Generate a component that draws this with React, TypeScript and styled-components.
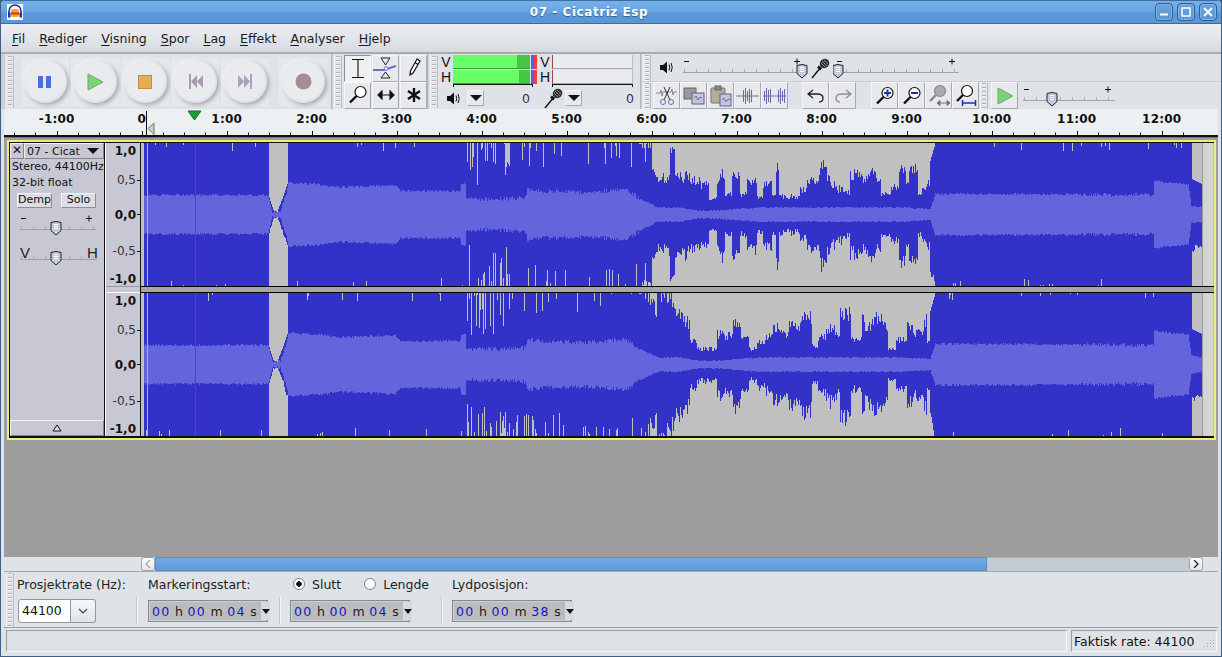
import React from 'react'
import styled, { createGlobalStyle } from 'styled-components'

const GlobalStyle = createGlobalStyle`
  html, body {
    margin: 0;
    height: 657px;
    overflow: hidden;
    background: #3a5a80;
  }
  body, button {
    font-family: "DejaVu Sans", sans-serif;
    font-size: 12.5px;
    color: #111;
  }
`

/* waveform data */
type Pt = [number, number]

const PEAK: Pt[] = [
  [143, 1], [268.9, 1], [269, 0.24], [273, 0.06], [277, 0.04], [283, 0.26], [287.9, 0.47], [288, 1],
  [638, 1], [641, 0.98], [650, 0.9], [660, 0.78], [675, 0.66], [690, 0.46], [720, 0.42], [760, 0.46],
  [800, 0.48], [850, 0.52], [900, 0.5], [925, 0.46], [930, 0.75], [935, 1], [1191, 1], [1191.5, 0.5], [1202, 0.42],
]

const RMS: Pt[] = [
  [143, 0.27], [268, 0.27], [272, 0.04], [280, 0.05], [286, 0.3], [288, 0.44], [320, 0.42], [340, 0.38],
  [395, 0.41], [400, 0.33], [460, 0.33], [460.5, 0.43], [465, 0.43], [466, 0.22], [503, 0.22], [525, 0.24],
  [527, 0.36], [540, 0.33], [590, 0.31], [625, 0.36], [640, 0.22], [657, 0.1], [680, 0.1], [700, 0.05],
  [720, 0.06], [760, 0.1], [900, 0.1], [930, 0.08], [935, 0.29], [1080, 0.28], [1150, 0.27], [1153, 0.27],
  [1154, 0.47], [1188, 0.42], [1191, 0.12], [1202, 0.1],
]

const makeRandom = (seed: number) => () => {
  seed = (seed + 0x6d2b79f5) | 0
  let t = Math.imul(seed ^ (seed >>> 15), 1 | seed)
  t = (t + Math.imul(t ^ (t >>> 7), 61 | t)) ^ t
  return ((t ^ (t >>> 14)) >>> 0) / 4294967296
}

const lerp = (pts: Pt[], x: number) => {
  for (let i = 1; i < pts.length; i++) {
    if (x <= pts[i][0]) {
      const [x0, y0] = pts[i - 1]
      const [x1, y1] = pts[i]
      return y0 + ((y1 - y0) * (x - x0)) / (x1 - x0)
    }
  }
  return pts[pts.length - 1][1]
}

const buildChannel = (seed: number) => {
  const rnd = makeRandom(seed)
  const half = 71.5
  let peakPath = ''
  let rmsPath = ''
  let lump = 1
  let lumpLeft = 0
  for (let x = 144; x < 1202; x++) {
    const base = lerp(PEAK, x)
    const quiet = x > 641 && x < 930
    if (lumpLeft-- <= 0) {
      lump = 0.45 + rnd() * 0.95
      lumpLeft = 2 + Math.floor(rnd() * 9)
    }
    const wobble = quiet ? lump * (0.85 + rnd() * 0.3) : 1
    const spike = (len: number, p: number) => (rnd() < p ? rnd() * len : 0)
    let zone: [number, number] = [0.12, 0.04]
    if (x > 466 && x < 510) zone = [0.6, 0.42]
    else if (x >= 510 && x < 640) zone = [0.34, 0.09]
    const full = base >= 1
    const up = full ? 1 - spike(zone[0], zone[1]) : Math.min(1, base * wobble)
    const down = full ? 1 - spike(zone[0], zone[1]) : Math.min(1, base * wobble * (0.9 + rnd() * 0.2))
    const jitter = x > 470 && x < 640 ? 0.06 : x > 1080 && x < 1154 ? 0.05 : x < 935 && x > 641 ? 0.02 : 0.03
    const r = Math.max(0.02, lerp(RMS, x) + (rnd() - 0.5) * jitter)
    const y0 = (half - up * half).toFixed(1)
    const y1 = (half + down * half).toFixed(1)
    peakPath += `M${x - 141} ${y0}h1V${y1}h-1z`
    rmsPath += `M${x - 141} ${(half - Math.min(r, up) * half).toFixed(1)}h1V${(half + Math.min(r, down) * half).toFixed(1)}h-1z`
  }
  return { peakPath, rmsPath }
}

const CHANNELS = [buildChannel(7), buildChannel(23)]

/* window frame */
const Win = styled.div`
  width: 1222px;
  height: 657px;
  box-sizing: border-box;
  display: flex;
  flex-direction: column;
  background: #dfe3e7;
  border: 1px solid #3f5f84;
  border-top: none;
  border-radius: 5px 5px 0 0;
  overflow: hidden;
`

const TitleBar = styled.div`
  height: 24px;
  flex: none;
  box-sizing: border-box;
  display: flex;
  align-items: center;
  padding: 0 4px 0 6px;
  background: linear-gradient(#76b0e8 0, #68a6e2 11px, #5c98d6 12px, #5c97d5 22px);
  border-top: 1px solid #3f6da0;
  border-bottom: 1px solid #3a6ca2;
`

const TitleText = styled.div`
  flex: 1;
  text-align: center;
  margin-left: 20px;
  margin-right: 16px;
  color: #fff;
  font-weight: bold;
  font-size: 12px;
  letter-spacing: 0.55px;
  text-shadow: 0 1px 1px #2f5f95;
`

const WinButton = styled.div`
  width: 18px;
  height: 18px;
  margin-left: 4px;
  box-sizing: border-box;
  border: 1px solid #2f5f95;
  border-radius: 4px;
  background: linear-gradient(#68a4e0, #5a96d4);
  box-shadow: inset 0 0 0 1px #80b2e6;
  display: flex;
  align-items: center;
  justify-content: center;
`

const Body = styled.div`
  flex: 1;
  min-height: 0;
  display: flex;
  flex-direction: column;
  padding: 0 3px;
`

const MenuBar = styled.div`
  height: 28px;
  flex: none;
  display: flex;
  align-items: center;
  gap: 14px;
  margin: 0 -3px;
  padding-left: 11px;
  background: linear-gradient(#eceef2, #d7dbe2);
`

const MenuItem = styled.span`
  color: #1a1a1a;
  u { text-underline-offset: 2px; }
`

/* toolbars */
const Dock = styled.div`
  height: 57px;
  flex: none;
  box-sizing: border-box;
  display: flex;
  border-top: 2px solid #a7acb3;
  margin: 0 -3px;
  padding-left: 4px;
  background: #ccd0d6;
  gap: 1px;
`

const Toolbar = styled.div<{ $w: number }>`
  width: ${(p) => p.$w}px;
  flex: none;
  box-sizing: border-box;
  display: flex;
  align-items: center;
  background: #dfe3e7;
  border-right: 1px solid #b4b8be;
`

const Grip = styled.div<{ $h?: number }>`
  width: 8px;
  height: ${(p) => p.$h ?? 52}px;
  flex: none;
  margin: 0 1px;
  box-sizing: border-box;
  border-left: 1px solid #f4f5f6;
  border-right: 1px solid #b9bdc3;
  background: repeating-linear-gradient(to bottom, #aeb2b8 0 1px, #f3f4f5 1px 2px, transparent 2px 4px) center / 4px 100% no-repeat;
`

const RoundButton = styled.div<{ $gap?: number }>`
  width: 48px;
  height: 48px;
  flex: none;
  margin-left: ${(p) => p.$gap ?? 2}px;
  background: #e6e9ec;
  display: flex;
  align-items: center;
  justify-content: center;
`

const RoundFace = styled.div`
  width: 43px;
  height: 43px;
  border-radius: 50%;
  background: #e9ebee;
  box-shadow: inset -1px -1px 2px #d8dbde, 2px 2px 4px #a3a6aa, -1px -1px 3px #f8f9fa;
  display: flex;
  align-items: center;
  justify-content: center;
`

const ToolGrid = styled.div`
  display: grid;
  grid-template-columns: repeat(3, 27px);
  grid-template-rows: 27px 27px;
  gap: 0 1px;
  margin-left: 1px;
`

const IconButton = styled.div<{ $down?: boolean }>`
  width: 27px;
  height: 27px;
  flex: none;
  box-sizing: border-box;
  display: flex;
  align-items: center;
  justify-content: center;
  background: ${(p) => (p.$down ? '#eef0f2' : '#e7e9ec')};
  border: 1px solid;
  border-color: ${(p) => (p.$down ? '#8b8f95 #f6f7f8 #f6f7f8 #8b8f95' : '#f6f7f8 #a6aab0 #a6aab0 #f6f7f8')};
`

/* meters */
const MeterPanel = styled.div`
  display: flex;
  flex-direction: column;
  align-self: flex-start;
  width: 200px;
  height: 52px;
`

const MeterBars = styled.div`
  display: flex;
  height: 34px;
`

const MeterSide = styled.div<{ $w: number }>`
  width: ${(p) => p.$w}px;
  display: flex;
  flex-direction: column;
`

const MeterRow = styled.div`
  height: 15px;
  display: flex;
  align-items: center;
`

const MeterLetter = styled.span`
  width: 14px;
  text-align: center;
  font-family: "Liberation Sans", sans-serif;
  font-size: 14px;
  line-height: 14px;
`

const MeterTrack = styled.div<{ $fill: number; $peak: number }>`
  width: 77px;
  height: 14px;
  box-sizing: border-box;
  border-bottom: 1px solid #39a039;
  background: linear-gradient(
    to right,
    #66ff66 ${(p) => p.$fill}px,
    #44c844 ${(p) => p.$fill}px ${(p) => p.$peak}px,
    #dfe3e7 ${(p) => p.$peak}px
  );
`

const MeterClip = styled.div`
  width: 6px;
  height: 14px;
  margin-left: 1px;
  background: linear-gradient(to right, #5a5ae8 0 3px, #f04040 3px);
`

const MeterEmpty = styled.div`
  width: 81px;
  height: 14px;
  box-sizing: border-box;
  border-left: 1px solid #b04040;
  border-right: 1px solid #b8bcc2;
  border-bottom: 1px solid #a8acb2;
  background: #e9ebee;
`

const MeterAxis = styled.div<{ $left: number; $w: number }>`
  width: ${(p) => p.$w}px;
  height: 3px;
  margin-left: ${(p) => p.$left}px;
  box-sizing: border-box;
  border: 1px solid #111;
  border-bottom: none;
`

const MeterControls = styled.div`
  flex: 1;
  display: flex;
  align-items: center;
`

const MeterArrow = styled.div<{ $left: number }>`
  width: 17px;
  height: 16px;
  margin-left: ${(p) => p.$left}px;
  box-sizing: border-box;
  background: #e7e9ec;
  border: 1px solid;
  border-color: #f6f7f8 #a6aab0 #a6aab0 #f6f7f8;
  display: flex;
  align-items: center;
  justify-content: center;
  &::after {
    content: '';
    border: 6px solid transparent;
    border-top: 6px solid #111;
    border-bottom: none;
  }
`

const MeterValue = styled.span<{ $w: number }>`
  width: ${(p) => p.$w}px;
  text-align: right;
  color: #333;
`

const RightDock = styled.div`
  display: flex;
  flex-direction: column;
  flex: 1;
  gap: 1px;
`

const DockRow = styled.div`
  height: 27px;
  display: flex;
  align-items: center;
  background: #dfe3e7;
`

const Spacer = styled.div<{ $w: number }>`
  width: ${(p) => p.$w}px;
  flex: none;
`

/* horizontal ruler */
const Ruler = styled.div`
  height: 28px;
  flex: none;
  position: relative;
  box-sizing: border-box;
  background: #edf0f3;
  border-bottom: 2px solid #111;
  display: flex;
  padding-left: 10.2px;
  align-items: flex-start;
`

const RulerLabel = styled.span`
  width: 85px;
  flex: none;
  margin-top: 3px;
  text-align: center;
  font-weight: bold;
  font-size: 12px;
  letter-spacing: 0.2px;
`

const RulerTicks = styled.svg`
  position: absolute;
  left: 0;
  top: 0;
`

/* track */
const TrackArea = styled.div`
  flex: 1;
  min-height: 0;
  padding: 2px 0 0 3px;
  background: #9d9d9d;
  border-top: 1px solid #777;
`

const Track = styled.div`
  width: 1209px;
  height: 300px;
  box-sizing: border-box;
  display: flex;
  background: #111;
  border: 2px solid #f0ec78;
  padding: 1px 0 2px 1px;
`

const Panel = styled.div`
  width: 95px;
  box-sizing: border-box;
  flex: none;
  display: flex;
  flex-direction: column;
  background: #c8c8d4;
  font-size: 11px;
  border-right: 1px solid #111;
`

const PanelHead = styled.div`
  height: 16px;
  display: flex;
  flex: none;
`

const CloseBox = styled.div`
  width: 14px;
  box-sizing: border-box;
  border: 1px solid;
  border-color: #f0f1f3 #84868c #84868c #f0f1f3;
  text-align: center;
  font-weight: bold;
  font-size: 12px;
  line-height: 13px;
`

const TrackName = styled.div`
  flex: 1;
  box-sizing: border-box;
  padding-left: 2px;
  display: flex;
  align-items: center;
  justify-content: space-between;
  padding-right: 4px;
  border: 1px solid;
  border-color: #f0f1f3 #84868c #84868c #f0f1f3;
  line-height: 13px;
  &::after {
    content: '';
    border: 6px solid transparent;
    border-top: 6px solid #111;
    border-bottom: none;
  }
`

const PanelText = styled.div`
  margin-left: 2px;
  height: 16px;
  line-height: 16px;
  white-space: nowrap;
  overflow: hidden;
`

const PanelButtons = styled.div`
  display: flex;
  gap: 9px;
  margin: 2px 0 0 7px;
`

const PanelButton = styled.div`
  width: 35px;
  height: 15px;
  box-sizing: border-box;
  text-align: center;
  line-height: 12px;
  background: #dcdce2;
  border: 1px solid;
  border-color: #f5f5f8 #8e8e96 #8e8e96 #f5f5f8;
`

const PanelSlider = styled.div<{ $top: number }>`
  margin-top: ${(p) => p.$top}px;
`

const Collapse = styled.div`
  margin-top: auto;
  height: 16px;
  flex: none;
  box-sizing: border-box;
  border: 1px solid;
  border-color: #f0f1f3 #84868c #84868c #f0f1f3;
  display: flex;
  align-items: center;
  justify-content: center;
`

const VRuler = styled.div`
  flex: none;
  display: flex;
  flex-direction: column;
  background: #c8c8d4;
  border-left: 1px solid #fff;
  box-sizing: border-box;
  width: 36px;
  border-right: 1px solid #111;
`

const VRulerChannel = styled.div`
  height: 143px;
  flex: none;
  display: grid;
  grid-template-rows: 16px 42px 27px 46px 9px;
`

const VLabel = styled.div<{ $bold?: boolean }>`
  display: flex;
  align-items: center;
  justify-content: flex-end;
  gap: 1px;
  font-weight: ${(p) => (p.$bold ? 'bold' : 'normal')};
  font-size: 12px;
  color: ${(p) => (p.$bold ? '#111' : '#333')};
`

const VTick = styled.span<{ $show?: boolean }>`
  width: 3px;
  height: 1px;
  flex: none;
  background: ${(p) => (p.$show ? '#111' : 'transparent')};
`

const VSep = styled.div`
  height: 7px;
  flex: none;
  box-sizing: border-box;
  border-top: 1px solid #99999f;
  border-bottom: 1px solid #fff;
`

const WaveColumn = styled.div`
  flex: 1;
  display: flex;
  flex-direction: column;
  background: #c0c0c0;
`

const WaveSep = styled.div`
  height: 7px;
  flex: none;
  box-sizing: border-box;
  background: #a6a6a6;
  border-top: 1px solid #000;
  border-bottom: 1px solid #000;
`

const WaveSvg = styled.svg`
  display: block;
  flex: none;
`

/* bottom */
const HScroll = styled.div`
  height: 15px;
  flex: none;
  box-sizing: border-box;
  display: flex;
  padding-left: 137px;
  padding-right: 15px;
  background: #dfe3e7;
  border-bottom: 1px solid #a4a9af;
`

const ScrollArrow = styled.div`
  width: 14px;
  flex: none;
  box-sizing: border-box;
  background: linear-gradient(#fafbfc, #e4e7ea);
  border: 1px solid #9ca3ab;
  border-radius: 3px;
  display: flex;
  align-items: center;
  justify-content: center;
`

const ScrollThumb = styled.div`
  width: 832px;
  flex: none;
  box-sizing: border-box;
  background: linear-gradient(#74ade6, #5d9ada);
  border: 1px solid #5a8cc0;
`

const ScrollTrough = styled.div`
  flex: 1;
  background: #c2cad2;
  border-top: 1px solid #a8b0b8;
`

const SelectionBar = styled.div`
  height: 56px;
  flex: none;
  display: flex;
  align-items: flex-start;
  padding: 1px 0 0 1px;
  box-sizing: border-box;
  border-bottom: 1px solid #9ba0a6;
`

const SelectionGroup = styled.div<{ $w: number; $pad: number }>`
  width: ${(p) => p.$w}px;
  flex: none;
  box-sizing: border-box;
  padding-left: ${(p) => p.$pad}px;
  display: flex;
  flex-direction: column;
`

const FieldLabel = styled.div`
  height: 22px;
  display: flex;
  align-items: center;
  white-space: nowrap;
  color: #222;
`

const RadioLabels = styled(FieldLabel)`
  padding-left: 3px;
`

const FieldRow = styled.div`
  display: flex;
  align-items: center;
  height: 26px;
  margin-top: 3px;
`

const VDivider = styled.div`
  width: 1px;
  height: 27px;
  flex: none;
  margin-top: 24px;
  background: #c3c7cc;
  box-shadow: 1px 0 0 #f5f6f7;
`

const ComboInput = styled.div`
  width: 53px;
  height: 24px;
  margin-left: 1px;
  box-sizing: border-box;
  padding-left: 3px;
  line-height: 22px;
  background: #fff;
  border: 1px solid #8f979f;
  border-radius: 3px 0 0 3px;
`

const ComboButton = styled.div`
  width: 25px;
  height: 24px;
  box-sizing: border-box;
  background: linear-gradient(#f8f9fa, #dfe3e7);
  border: 1px solid #8f979f;
  border-left: none;
  border-radius: 0 3px 3px 0;
  display: flex;
  align-items: center;
  justify-content: center;
`

const TimeBox = styled.div`
  width: 120px;
  height: 22px;
  box-sizing: border-box;
  display: flex;
  align-items: center;
  padding-left: 3px;
  gap: 4.4px;
  background: #bcbcbc;
  border: 1px solid #7f8a96;
  box-shadow: inset 0 0 0 1px #cfd2d6;
  letter-spacing: 1.4px;
`

const TimeDigits = styled.span`
  color: #1414c8;
`

const TimeUnit = styled.span`
  color: #222;
  letter-spacing: 0;
`

const TimeDrop = styled.div`
  width: 9px;
  height: 18px;
  flex: none;
  margin-left: auto;
  margin-right: 1px;
  background: #d8dade;
  display: flex;
  align-items: center;
  justify-content: center;
  &::after {
    content: '';
    border: 4px solid transparent;
    border-top: 5px solid #111;
    border-bottom: none;
  }
`

const RadioLine = styled.div`
  display: flex;
  align-items: center;
  gap: 7px;
`

const Radio = styled.span<{ $on?: boolean }>`
  width: 12px;
  height: 12px;
  flex: none;
  box-sizing: border-box;
  border-radius: 50%;
  border: 1px solid #79828b;
  background: ${(p) => (p.$on ? 'radial-gradient(circle, #111 0 2.5px, #fff 3px)' : '#fff')};
`

const StatusBar = styled.div`
  height: 28px;
  flex: none;
  margin: 0 -3px;
  display: flex;
  padding: 2px 4px 4px 5px;
  box-sizing: border-box;
  gap: 4px;
`

const StatusField = styled.div<{ $w?: number }>`
  ${(p) => (p.$w ? `width: ${p.$w}px;` : 'flex: 1;')}
  box-sizing: border-box;
  display: flex;
  align-items: center;
  justify-content: space-between;
  padding: 0 1px 0 2px;
  border: 1px solid;
  border-color: #999ea4 #f5f6f7 #f5f6f7 #999ea4;
  white-space: nowrap;
`

/* drawings */
const LogoIcon: React.FC = () => (
  <svg width="16" height="16" viewBox="0 0 16 16">
    <rect width="16" height="16" fill="#fff" />
    <path d="M2 11V7a6 6 0 0 1 12 0v4" fill="none" stroke="#1c2fa8" strokeWidth="1.6" />
    <rect x="1" y="8.5" width="2.5" height="5" fill="#1c2fa8" />
    <rect x="12.5" y="8.5" width="2.5" height="5" fill="#1c2fa8" />
    <rect x="4" y="5" width="8" height="8" rx="2" fill="#f5a623" />
    <rect x="4" y="8.5" width="8" height="2" fill="#e0301e" />
  </svg>
)

const Magnifier: React.FC<{ children?: React.ReactNode }> = ({ children }) => (
  <svg width="22" height="22" viewBox="0 0 22 22">
    <circle cx="13.5" cy="8" r="5.5" fill="#fff" stroke="#111" strokeWidth="1.2" />
    <path d="M9.5 12L3 18.5" stroke="#111" strokeWidth="2.4" />
    {children}
  </svg>
)

const SpeakerIcon: React.FC = () => (
  <svg width="15" height="15" viewBox="0 0 15 15">
    <path d="M1 5h3l4-3.5v12L4 10H1z" fill="#111" />
    <path d="M10 4.5q1.5 3 0 6M12 3q2.5 4.500 0 9" fill="none" stroke="#111" />
  </svg>
)

const MicIcon: React.FC = () => (
  <svg width="20" height="22" viewBox="0 0 20 22">
    <path d="M1 21L10 10" stroke="#111" strokeWidth="1.4" />
    <path d="M7 9.500l3 3" stroke="#111" strokeWidth="2.500" />
    <ellipse cx="13.500" cy="6.500" rx="5" ry="4.500" transform="rotate(-45 13.500 6.500)" fill="#333" />
    <path d="M11 4l5 5M13 3l4 4M10 6l4 4" stroke="#999" strokeWidth="0.8" />
  </svg>
)

const WaveGlyph: React.FC<{ d: string }> = ({ d }) => (
  <svg width="25" height="20" viewBox="0 0 25 20">
    <path d="M1 10h23" stroke="#777" />
    <path d={d} fill="none" stroke="#6a6aa8" />
  </svg>
)

const StatusDots: React.FC = () => (
  <svg width="11" height="11" viewBox="0 0 11 11">
    <path d="M9 1h1v1H9zM6 4h1v1H6zM9 4h1v1H9zM3 7h1v1H3zM6 7h1v1H6zM9 7h1v1H9zM0 10h1v1H0zM3 10h1v1H3zM6 10h1v1H6zM9 10h1v1H9z" fill="#a8adb3" />
  </svg>
)

const Slider: React.FC<{
  width: number
  height: number
  base: number
  pos: number
  start?: number
  end?: number
  lowAt?: number
  low?: string
  high?: string
}> = ({ width, height, base, pos, start = 0, end, lowAt, low, high }) => {
  const right = end ?? width
  const ticks: number[] = []
  for (let x = start + 1; x < right; x += 12) ticks.push(x)
  const top = base - 8
  return (
    <svg width={width} height={height} viewBox={`0 0 ${width} ${height}`} style={{ flex: 'none', display: 'block' }}>
      <path d={`M${start} ${base + 0.5}H${right}`} stroke="#a0a4a8" />
      {ticks.map((x) => (
        <path key={x} d={`M${x + 0.5} ${base - 3}V${base}`} stroke="#a8acb0" />
      ))}
      {low ? (
        <text x={start} y={base - 1} fontFamily="Liberation Sans" fontSize="15" fill="#222">{low}</text>
      ) : (
        <path d={`M${lowAt ?? start + 1} ${base - 10.500}h5`} stroke="#111" />
      )}
      {high ? (
        <text x={right - 10} y={base - 1} fontFamily="Liberation Sans" fontSize="15" fill="#222">{high}</text>
      ) : (
        <path d={`M${right - 10} ${base - 10.500}h6M${right - 7} ${base - 13.500}v6`} stroke="#111" />
      )}
      <path
        d={`M${pos - 5} ${top + 1.500}q5 -2 10 0V${base + 1.500}L${pos} ${base + 6}L${pos - 5} ${base + 1.500}z`}
        fill="#c6c8de"
        stroke="#222"
      />
      <path d={`M${pos - 2} ${base - 4.500}h4M${pos - 2} ${base - 2.500}h4M${pos - 2} ${base - 0.500}h4`} stroke="#fff" />
    </svg>
  )
}

const RULER_LABELS = ['-1:00', '0', '1:00', '2:00', '3:00', '4:00', '5:00', '6:00', '7:00', '8:00', '9:00', '10:00', '11:00', '12:00']

const RulerDrawing: React.FC = () => {
  const ticks: React.ReactNode[] = []
  for (let i = -6; i <= 50; i++) {
    const x = Math.round(141.7 + i * 21.25 - 4) + 0.5
    if (x > 1204 - 4) break
    ticks.push(<path key={i} d={`M${x} ${i % 4 === 0 ? 22 : 23.500}V26`} stroke="#111" />)
  }
  return (
    <RulerTicks width="1214" height="26">
      {ticks}
      <path d="M142.500 2V26" stroke="#111" />
      <path d="M150 14l-6 5.500 6 6z" fill="#ccc" stroke="#777" />
      <path d="M184 2h13l-6.500 9z" fill="#1f9a35" stroke="#14702a" />
    </RulerTicks>
  )
}

const Channel: React.FC<{ index: number }> = ({ index }) => {
  const { peakPath, rmsPath } = CHANNELS[index]
  return (
    <WaveSvg width="1072" height="143" viewBox="0 0 1072 143" shapeRendering="crispEdges">
      <rect x="1061" width="11" height="143" fill="#d4d4d4" />
      <rect x="1061" width="1" height="143" fill="#999" />
      <path d={peakPath} fill="#3232c8" />
      <path d={rmsPath} fill="#6464dc" />
      <rect x="6" width="1" height="143" fill="#b8b878" />
      <rect x="54" width="1" height="143" fill="#35607a" />
    </WaveSvg>
  )
}

const VScale: React.FC = () => (
  <VRulerChannel>
    <VLabel $bold>1,0<VTick /></VLabel>
    <VLabel>0,5<VTick $show /></VLabel>
    <VLabel $bold>0,0<VTick $show /></VLabel>
    <VLabel>-0,5<VTick $show /></VLabel>
    <VLabel $bold>-1,0<VTick /></VLabel>
  </VRulerChannel>
)

const TimeField: React.FC<{ s: string }> = ({ s }) => (
  <TimeBox>
    <TimeDigits>00</TimeDigits>
    <TimeUnit>h</TimeUnit>
    <TimeDigits>00</TimeDigits>
    <TimeUnit>m</TimeUnit>
    <TimeDigits>{s}</TimeDigits>
    <TimeUnit>s</TimeUnit>
    <TimeDrop />
  </TimeBox>
)

const MENU: [string, string][] = [
  ['F', 'il'], ['R', 'ediger'], ['V', 'isning'], ['S', 'por'], ['L', 'ag'], ['E', 'ffekt'], ['A', 'nalyser'], ['H', 'jelp'],
]

const App: React.FC = () => {
  return (
    <Win>
      <GlobalStyle />
      <TitleBar>
        <LogoIcon />
        <TitleText>07 - Cicatriz Esp</TitleText>
        <WinButton>
          <svg width="10" height="10"><path d="M1 7.500h8" stroke="#fff" strokeWidth="2" /></svg>
        </WinButton>
        <WinButton>
          <svg width="10" height="10"><rect x="1" y="1" width="8" height="8" fill="none" stroke="#fff" strokeWidth="1.500" /></svg>
        </WinButton>
        <WinButton>
          <svg width="10" height="10"><path d="M1 1l8 8M9 1l-8 8" stroke="#fff" strokeWidth="2" /></svg>
        </WinButton>
      </TitleBar>
      <Body>
        <MenuBar>
          {MENU.map(([key, rest]) => (
            <MenuItem key={key}><u>{key}</u>{rest}</MenuItem>
          ))}
        </MenuBar>

        <Dock>
          <Toolbar $w={327}>
            <Grip />
            <RoundButton $gap={6}>
              <RoundFace>
                <svg width="16" height="14"><path d="M1 1h5v12H1zM9 1h5v12H9z" fill="#4a6cdc" /></svg>
              </RoundFace>
            </RoundButton>
            <RoundButton>
              <RoundFace>
                <svg width="18" height="18"><path d="M2 1l15 8-15 8z" fill="#80d080" stroke="#60b060" /></svg>
              </RoundFace>
            </RoundButton>
            <RoundButton>
              <RoundFace>
                <svg width="14" height="14"><rect x="0.500" y="0.500" width="13" height="13" fill="#e5ad55" stroke="#c49040" /></svg>
              </RoundFace>
            </RoundButton>
            <RoundButton>
              <RoundFace>
                <svg width="15" height="15"><path d="M1 0h2v15H1zM9 1v13L3 7.500zM15 1v13L9 7.500z" fill="#a89cb0" /></svg>
              </RoundFace>
            </RoundButton>
            <RoundButton>
              <RoundFace>
                <svg width="15" height="15"><path d="M12 0h2v15h-2zM6 1v13l6-6.500zM0 1v13l6-6.500z" fill="#a9a0c4" /></svg>
              </RoundFace>
            </RoundButton>
            <RoundButton $gap={10}>
              <RoundFace>
                <svg width="17" height="17"><circle cx="8.500" cy="8.500" r="8" fill="#a29090" /></svg>
              </RoundFace>
            </RoundButton>
          </Toolbar>

          <Toolbar $w={95}>
            <Grip />
            <ToolGrid>
              <IconButton $down>
                <svg width="14" height="19"><path d="M1 .5h12M1 18.500h12M7 .5v18" stroke="#111" strokeWidth="1.100" /></svg>
              </IconButton>
              <IconButton>
                <svg width="26" height="22">
                  <path d="M8 1h9l-4.500 7zM8 21h9l-4.500-6z" fill="none" stroke="#222" />
                  <path d="M0 13h11l12-4" fill="none" stroke="#6a6adc" strokeWidth="2" />
                  <circle cx="13" cy="11.500" r="1.800" fill="#fff" stroke="#6a6adc" />
                </svg>
              </IconButton>
              <IconButton>
                <svg width="14" height="20"><path d="M10 1l3 2-7 12-3 2 .5-4zM8 4.500l3 2" fill="#fff" stroke="#111" strokeWidth="1.200" /></svg>
              </IconButton>
              <IconButton>
                <Magnifier />
              </IconButton>
              <IconButton>
                <svg width="18" height="10"><path d="M3 5h12M5 1L1 5l4 4zM13 1l4 4-4 4z" fill="#111" stroke="#111" strokeWidth="1.200" /></svg>
              </IconButton>
              <IconButton>
                <svg width="14" height="14"><path d="M7 0v14M1 3l12 8M13 3L1 11" stroke="#111" strokeWidth="2.400" /></svg>
              </IconButton>
            </ToolGrid>
          </Toolbar>

          <Toolbar $w={212}>
            <Grip />
            <MeterPanel>
              <MeterBars>
                <MeterSide $w={99}>
                  <MeterRow>
                    <MeterLetter>V</MeterLetter>
                    <MeterTrack $fill={64} $peak={77} />
                    <MeterClip />
                  </MeterRow>
                  <MeterRow>
                    <MeterLetter>H</MeterLetter>
                    <MeterTrack $fill={66} $peak={77} />
                    <MeterClip />
                  </MeterRow>
                  <MeterAxis $left={14} $w={80} />
                </MeterSide>
                <MeterSide $w={96}>
                  <MeterRow>
                    <MeterLetter>V</MeterLetter>
                    <MeterEmpty />
                  </MeterRow>
                  <MeterRow>
                    <MeterLetter>H</MeterLetter>
                    <MeterEmpty />
                  </MeterRow>
                  <MeterAxis $left={14} $w={81} />
                </MeterSide>
              </MeterBars>
              <MeterControls>
                <Spacer $w={7} />
                <SpeakerIcon />
                <MeterArrow $left={6} />
                <MeterValue $w={46}>0</MeterValue>
                <Spacer $w={14} />
                <MicIcon />
                <MeterArrow $left={1} />
                <MeterValue $w={52}>0</MeterValue>
              </MeterControls>
            </MeterPanel>
          </Toolbar>

          <RightDock>
            <DockRow>
              <Grip $h={26} />
              <Spacer $w={7} />
              <SpeakerIcon />
              <Spacer $w={7} />
              <Slider width={127} height={27} base={18} pos={121} start={2} end={123} />
              <Spacer $w={3} />
              <MicIcon />
              <Spacer $w={2} />
              <Slider width={127} height={27} base={18} pos={5} end={126} lowAt={4} />
            </DockRow>
            <DockRow>
              <Grip $h={26} />
              <Spacer $w={1} />
              <IconButton>
                <svg width="24" height="20">
                  <path d="M1 7h4l1-3 1 6 1-4h8l1-3 1 6 1-3h3" fill="none" stroke="#888" />
                  <path d="M15 1l-6 13M9 1l6 13" stroke="#333" />
                  <circle cx="8" cy="16" r="2.500" fill="none" stroke="#6a6ab0" />
                  <circle cx="16" cy="16" r="2.500" fill="none" stroke="#6a6ab0" />
                </svg>
              </IconButton>
              <IconButton>
                <svg width="22" height="20">
                  <rect x="1" y="2" width="12" height="11" fill="#999" stroke="#666" />
                  <rect x="9" y="7" width="12" height="11" fill="#c5c5d8" stroke="#5f5f9a" />
                  <path d="M11 12l2-2 2 4 2-3 2 1" fill="none" stroke="#6a6aa8" />
                </svg>
              </IconButton>
              <IconButton>
                <svg width="22" height="22">
                  <rect x="1" y="3" width="14" height="15" rx="1" fill="#b4ae90" stroke="#777" />
                  <rect x="5" y="1" width="6" height="4" fill="#888" stroke="#666" />
                  <rect x="10" y="9" width="11" height="12" fill="#c5c5d8" stroke="#5f5f9a" />
                  <path d="M12 15l2-2 2 4 2-3 2 1" fill="none" stroke="#6a6aa8" />
                </svg>
              </IconButton>
              <IconButton>
                <WaveGlyph d="M8.500 4v12M10.500 2v16M12.500 5v10M14.500 3v14M16.500 4v12" />
              </IconButton>
              <IconButton>
                <WaveGlyph d="M2.500 5v10M4.500 2v16M6.500 4v12M8.500 3v14M16.500 4v12M18.500 2v16M20.500 5v10M22.500 3v14" />
              </IconButton>
              <Spacer $w={14} />
              <IconButton>
                <svg width="18" height="14"><path d="M6 1L1 5l5 4M1 5h9q6 0 6 4t-4 4" fill="none" stroke="#222" strokeWidth="1.300" /></svg>
              </IconButton>
              <IconButton>
                <svg width="18" height="14"><path d="M12 1l5 4-5 4M17 5H8q-6 0-6 4t4 4" fill="none" stroke="#8a8e94" strokeWidth="1.300" /></svg>
              </IconButton>
              <Spacer $w={15} />
              <IconButton>
                <Magnifier>
                  <path d="M10 8h7M13.500 4.500v7" stroke="#1c2fa8" strokeWidth="2" />
                </Magnifier>
              </IconButton>
              <IconButton>
                <Magnifier>
                  <path d="M10 8h7" stroke="#1c2fa8" strokeWidth="2" />
                </Magnifier>
              </IconButton>
              <IconButton>
                <svg width="24" height="23" viewBox="0 0 24 23">
                  <circle cx="13" cy="7" r="5.500" fill="#aaa" stroke="#888" strokeWidth="1.200" />
                  <path d="M9 11L3 17" stroke="#888" strokeWidth="2.400" />
                  <path d="M10 19h13M13 16.500L10 19l3 2.500zM20 16.500l3 2.500-3 2.500z" fill="#777" stroke="#777" />
                </svg>
              </IconButton>
              <IconButton>
                <svg width="24" height="23" viewBox="0 0 24 23">
                  <circle cx="13" cy="7" r="5.500" fill="#fff" stroke="#111" strokeWidth="1.200" />
                  <path d="M9 11L3 17" stroke="#111" strokeWidth="2.400" />
                  <path d="M8 19h14M8.500 16v6M21.500 16v6" fill="none" stroke="#1c2fa8" strokeWidth="1.500" />
                </svg>
              </IconButton>
              <Grip $h={26} />
              <Spacer $w={2} />
              <IconButton>
                <svg width="18" height="18"><path d="M2 1l15 8-15 8z" fill="#80d080" stroke="#60b060" /></svg>
              </IconButton>
              <Spacer $w={5} />
              <Slider width={92} height={27} base={18} pos={29} />
            </DockRow>
          </RightDock>
        </Dock>

        <Ruler>
          {RULER_LABELS.map((label) => (
            <RulerLabel key={label}>{label}</RulerLabel>
          ))}
          <RulerDrawing />
        </Ruler>

        <TrackArea>
          <Track>
            <Panel>
              <PanelHead>
                <CloseBox>✕</CloseBox>
                <TrackName>07 - Cicat</TrackName>
              </PanelHead>
              <PanelText>Stereo, 44100Hz</PanelText>
              <PanelText>32-bit float</PanelText>
              <PanelButtons>
                <PanelButton>Demp</PanelButton>
                <PanelButton>Solo</PanelButton>
              </PanelButtons>
              <PanelSlider $top={6}>
                <Slider width={94} height={25} base={15} pos={46} start={10} end={86} />
              </PanelSlider>
              <PanelSlider $top={5}>
                <Slider width={94} height={25} base={15} pos={46} start={10} end={87} low="V" high="H" />
              </PanelSlider>
              <Collapse>
                <svg width="10" height="8"><path d="M5 1l4 6H1z" fill="#ddd" stroke="#111" /></svg>
              </Collapse>
            </Panel>
            <VRuler>
              <VScale />
              <VSep />
              <VScale />
            </VRuler>
            <WaveColumn>
              <Channel index={0} />
              <WaveSep />
              <Channel index={1} />
            </WaveColumn>
          </Track>
        </TrackArea>

        <HScroll>
          <ScrollArrow>
            <svg width="6" height="8"><path d="M5 0L1 4l4 4" fill="none" stroke="#aaa" strokeWidth="1.300" /></svg>
          </ScrollArrow>
          <ScrollThumb />
          <ScrollTrough />
          <ScrollArrow>
            <svg width="6" height="8"><path d="M1 0l4 4-4 4" fill="none" stroke="#222" strokeWidth="1.300" /></svg>
          </ScrollArrow>
        </HScroll>

        <SelectionBar>
          <Grip $h={54} />
          <SelectionGroup $w={121} $pad={2}>
            <FieldLabel>Prosjektrate (Hz):</FieldLabel>
            <FieldRow>
              <ComboInput>44100</ComboInput>
              <ComboButton>
                <svg width="10" height="6"><path d="M1 1l4 4 4-4" fill="none" stroke="#444" strokeWidth="1.200" /></svg>
              </ComboButton>
            </FieldRow>
          </SelectionGroup>
          <VDivider />
          <SelectionGroup $w={142} $pad={11}>
            <FieldLabel>Markeringsstart:</FieldLabel>
            <FieldRow><TimeField s="04" /></FieldRow>
          </SelectionGroup>
          <VDivider />
          <SelectionGroup $w={161} $pad={10}>
            <RadioLabels>
              <RadioLine>
                <Radio $on />
                Slutt
              </RadioLine>
              <Spacer $w={23} />
              <RadioLine>
                <Radio />
                Lengde
              </RadioLine>
            </RadioLabels>
            <FieldRow><TimeField s="04" /></FieldRow>
          </SelectionGroup>
          <VDivider />
          <SelectionGroup $w={200} $pad={10}>
            <FieldLabel>Lydposisjon:</FieldLabel>
            <FieldRow><TimeField s="38" /></FieldRow>
          </SelectionGroup>
        </SelectionBar>

        <StatusBar>
          <StatusField />
          <StatusField $w={146}>
            Faktisk rate: 44100
            <StatusDots />
          </StatusField>
        </StatusBar>
      </Body>
    </Win>
  )
}

export default App
